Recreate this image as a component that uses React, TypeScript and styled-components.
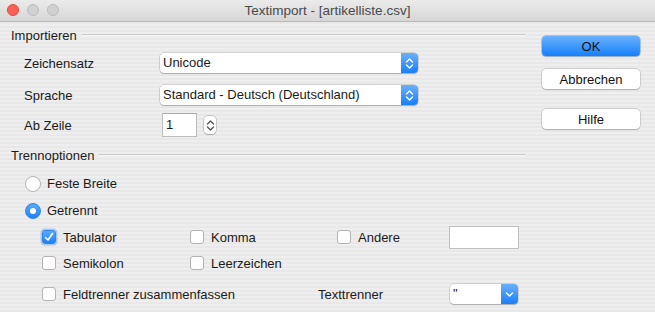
import styled, { createGlobalStyle } from 'styled-components'

const GlobalStyle = createGlobalStyle`
  html, body {
    margin: 0;
    padding: 0;
    background: #ececec;
  }
  body {
    font-family: 'Liberation Sans', Arial, sans-serif;
    font-size: 13px;
    color: #1a1a1a;
  }
`

const Chevrons = ({ color }: { color: string }) => (
  <svg width='9' height='13' viewBox='0 0 9 13'>
    <path d='M1.5 5 L4.5 2 L7.5 5' fill='none' stroke={color} strokeWidth='1.4' strokeLinecap='round' strokeLinejoin='round' />
    <path d='M1.5 8 L4.5 11 L7.5 8' fill='none' stroke={color} strokeWidth='1.4' strokeLinecap='round' strokeLinejoin='round' />
  </svg>
)

const ChevronDown = () => (
  <svg width='9' height='7' viewBox='0 0 9 7'>
    <path d='M1.5 2 L4.5 5 L7.5 2' fill='none' stroke='#fff' strokeWidth='1.4' strokeLinecap='round' strokeLinejoin='round' />
  </svg>
)

function Select({ value, width, single }: { value: string; width: number; single?: boolean }) {
  return (
    <SelectBox style={{ width }}>
      <SelectValue>{value}</SelectValue>
      <SelectArrow>{single ? <ChevronDown /> : <Chevrons color='#fff' />}</SelectArrow>
    </SelectBox>
  )
}

function Checkbox({ label, checked }: { label: string; checked?: boolean }) {
  return (
    <Option>
      <CheckBox checked={checked}>
        {checked && (
          <svg width='12' height='12' viewBox='0 0 12 12'>
            <path d='M2.5 6.5 L5 9 L9.5 2.5' fill='none' stroke='#fff' strokeWidth='1.6' strokeLinecap='round' strokeLinejoin='round' />
          </svg>
        )}
      </CheckBox>
      <span>{label}</span>
    </Option>
  )
}

function Radio({ label, checked }: { label: string; checked?: boolean }) {
  return (
    <RadioRow>
      <RadioCircle checked={checked}>{checked && <RadioDot />}</RadioCircle>
      <span>{label}</span>
    </RadioRow>
  )
}

export default function App() {
  return (
    <Window>
      <GlobalStyle />
      <TitleBar>
        <Lights>
          <Light color='#fc5f57' border='#de4a42' />
          <Light color='#d0d0d0' border='#bcbcbc' />
          <Light color='#d0d0d0' border='#bcbcbc' />
        </Lights>
        <Title>Textimport - [artikelliste.csv]</Title>
      </TitleBar>
      <Body>
        <Left>
          <SectionHead>
            <span>Importieren</span>
            <Rule />
          </SectionHead>
          <FormGrid>
            <FormRow height={32}>
              <Label>Zeichensatz</Label>
              <Select value='Unicode' width={258} />
            </FormRow>
            <FormRow height={32}>
              <Label>Sprache</Label>
              <Select value='Standard - Deutsch (Deutschland)' width={258} />
            </FormRow>
            <FormRow height={28}>
              <Label>Ab Zeile</Label>
              <NumberField>1</NumberField>
              <Stepper>
                <Chevrons color='#555' />
              </Stepper>
            </FormRow>
          </FormGrid>
          <SectionHead top={8}>
            <span>Trennoptionen</span>
            <Rule />
          </SectionHead>
          <RadioGroup>
            <Radio label='Feste Breite' />
            <Radio label='Getrennt' checked />
          </RadioGroup>
          <CheckGrid>
            <Checkbox label='Tabulator' checked />
            <Checkbox label='Komma' />
            <Checkbox label='Andere' />
            <TextField />
            <Checkbox label='Semikolon' />
            <Checkbox label='Leerzeichen' />
          </CheckGrid>
          <BottomRow>
            <BottomCell>
              <Checkbox label='Feldtrenner zusammenfassen' />
            </BottomCell>
            <Label>Texttrenner</Label>
            <SelectSlot>
              <Select value='"' width={68} single />
            </SelectSlot>
          </BottomRow>
        </Left>
        <Right>
          <Button primary>OK</Button>
          <Button>Abbrechen</Button>
          <Button top={7}>Hilfe</Button>
        </Right>
      </Body>
    </Window>
  )
}

const Window = styled.div`
  width: 655px;
  height: 312px;
  overflow: hidden;
  background: repeating-linear-gradient(#eeeeee 0 2px, #e8e8e8 2px 4px);
`

const TitleBar = styled.div`
  height: 21px;
  position: relative;
  display: flex;
  align-items: center;
  justify-content: center;
  background: linear-gradient(#ebebeb, #d6d6d6);
  border-bottom: 1px solid #b9b9b9;
`

const Lights = styled.div`
  position: absolute;
  left: 7px;
  top: 4px;
  display: flex;
  gap: 8px;
`

const Light = styled.div<{ color: string; border: string }>`
  width: 12px;
  height: 12px;
  box-sizing: border-box;
  border-radius: 50%;
  background: ${(p) => p.color};
  border: 0.5px solid ${(p) => p.border};
`

const Title = styled.div`
  color: #4a4a4a;
  font-size: 13.5px;
`

const Body = styled.div`
  display: flex;
  padding-left: 11px;
`

const Left = styled.div`
  width: 514px;
  display: flex;
  flex-direction: column;
`

const SectionHead = styled.div<{ top?: number }>`
  height: 16px;
  margin-top: ${(p) => p.top ?? 5}px;
  display: flex;
  align-items: center;
  gap: 5px;
`

const Rule = styled.div`
  flex: 1;
  height: 1px;
  background: #c9c9c9;
  border-bottom: 1px solid #f7f7f7;
`

const FormGrid = styled.div`
  display: flex;
  flex-direction: column;
  padding: 4px 0 0 13px;
`

const FormRow = styled.div<{ height: number }>`
  height: ${(p) => p.height}px;
  display: flex;
  align-items: center;
`

const Label = styled.span`
  width: 136px;
  flex-shrink: 0;
`

const SelectBox = styled.div`
  height: 20px;
  display: flex;
  background: #fff;
  border-radius: 4px;
  box-shadow: 0 0 0 0.5px rgba(0, 0, 0, 0.22), 0 1px 1px rgba(0, 0, 0, 0.18);
  overflow: hidden;
`

const SelectValue = styled.div`
  flex: 1;
  padding-left: 3px;
  line-height: 20px;
  white-space: nowrap;
`

const SelectArrow = styled.div`
  width: 17px;
  display: flex;
  align-items: center;
  justify-content: center;
  background: linear-gradient(#6ab0fb, #1a7ff5);
`

const NumberField = styled.div`
  margin-left: 2px;
  width: 30px;
  height: 22px;
  line-height: 22px;
  padding-left: 3px;
  background: #fff;
  border: 1px solid #bdbdbd;
  border-top-color: #a8a8a8;
`

const Stepper = styled.div`
  margin-left: 7px;
  width: 12px;
  height: 18px;
  display: flex;
  align-items: center;
  justify-content: center;
  background: #fff;
  border-radius: 4px;
  box-shadow: 0 0 0 0.5px rgba(0, 0, 0, 0.3), 0 1px 1px rgba(0, 0, 0, 0.15);
`

const RadioGroup = styled.div`
  display: flex;
  flex-direction: column;
  padding: 7px 0 0 14px;
`

const RadioRow = styled.div`
  height: 27px;
  display: flex;
  align-items: center;
  gap: 6px;
`

const RadioCircle = styled.div<{ checked?: boolean }>`
  width: 16px;
  height: 16px;
  box-sizing: border-box;
  border-radius: 50%;
  display: flex;
  align-items: center;
  justify-content: center;
  background: ${(p) => (p.checked ? 'linear-gradient(#5aa8fb, #1f82f5)' : '#fff')};
  border: 1px solid ${(p) => (p.checked ? '#2f86ee' : '#b3b3b3')};
`

const RadioDot = styled.div`
  width: 6px;
  height: 6px;
  border-radius: 50%;
  background: #fff;
`

const CheckGrid = styled.div`
  display: grid;
  grid-template-columns: 148px 147px 112px 70px;
  grid-auto-rows: 26px;
  padding-left: 31px;
  align-items: center;
`

const Option = styled.div`
  display: flex;
  align-items: center;
  gap: 7px;
  white-space: nowrap;
`

const CheckBox = styled.div<{ checked?: boolean }>`
  width: 14px;
  height: 14px;
  box-sizing: border-box;
  border-radius: 3px;
  display: flex;
  align-items: center;
  justify-content: center;
  background: ${(p) => (p.checked ? 'linear-gradient(#5aa8fb, #1f82f5)' : '#fff')};
  border: 1px solid ${(p) => (p.checked ? '#2f86ee' : '#b3b3b3')};
  box-shadow: ${(p) => (p.checked ? '0 0 0 1.5px rgba(80, 150, 240, 0.45)' : 'none')};
`

const TextField = styled.div`
  width: 70px;
  height: 23px;
  box-sizing: border-box;
  background: #fff;
  border: 1px solid #c0c0c0;
`

const BottomRow = styled.div`
  height: 26px;
  margin-top: 5px;
  display: flex;
  align-items: center;
  padding-left: 31px;
`

const BottomCell = styled.div`
  width: 276px;
`

const SelectSlot = styled.div`
  margin-left: -4px;
`

const Right = styled.div`
  display: flex;
  flex-direction: column;
  padding: 14px 0 0 17px;
  gap: 13px;
`

const Button = styled.div<{ primary?: boolean; top?: number }>`
  width: 98px;
  height: 20px;
  margin-top: ${(p) => p.top ?? 0}px;
  display: flex;
  align-items: center;
  justify-content: center;
  border-radius: 4px;
  color: #111;
  background: ${(p) => (p.primary ? 'linear-gradient(#6ab2fc, #1680fa)' : '#fff')};
  box-shadow: ${(p) =>
    p.primary
      ? '0 0 0 0.5px rgba(20, 100, 220, 0.6), 0 1px 1px rgba(0, 0, 0, 0.15)'
      : '0 0 0 0.5px rgba(0, 0, 0, 0.25), 0 1px 1px rgba(0, 0, 0, 0.15)'};
`
